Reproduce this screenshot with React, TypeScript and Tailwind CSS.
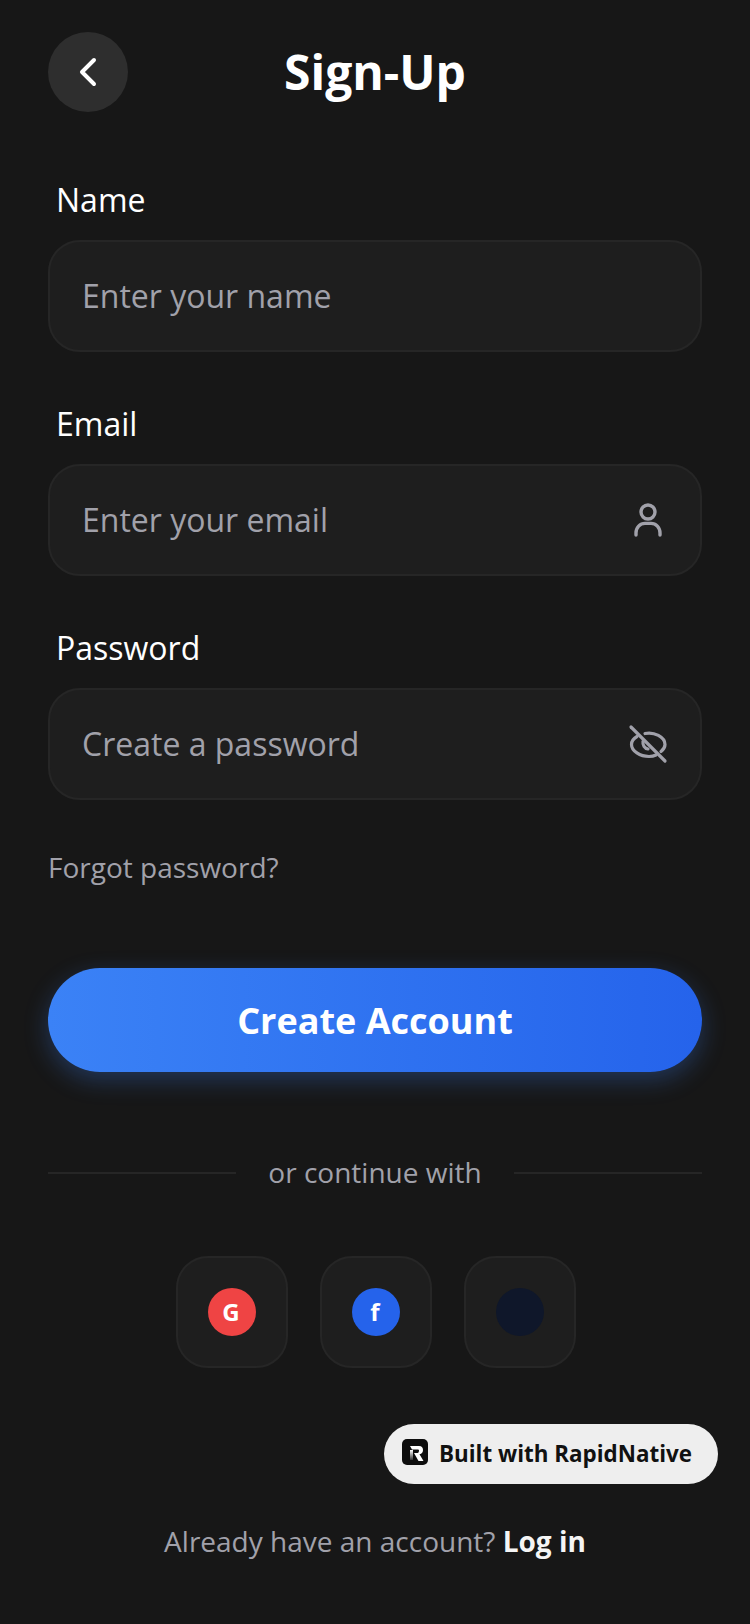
import type { ReactNode } from "react";
import { ChevronLeft } from "lucide-react";

const font = "font-['Open_Sans',sans-serif]";

function PersonIcon() {
  return (
    <svg width="40" height="40" viewBox="0 0 40 40" fill="none" stroke="#a1a1aa" strokeWidth="3.4" strokeLinecap="round">
      <circle cx="20" cy="12" r="7" />
      <path d="M8 35 V33 C8 27.500 12 23.400 17 23.400 H23 C28 23.400 32 27.500 32 33 V35" />
    </svg>
  );
}

function EyeOffIcon() {
  return (
    <svg width="40" height="40" viewBox="0 0 40 40" fill="none" stroke="#a1a1aa" strokeWidth="3.2" strokeLinecap="round" strokeLinejoin="round">
      <path d="M3 3 L37 37" />
      <path d="M17 9.500 C26 7.500 37 13 37 20.500 C37 23 35.500 25.500 33 27.500" />
      <path d="M9 12.500 C5.500 14.500 3.500 17.500 3.500 20.500 C3.500 27 12 32.500 21 32.500 C23.500 32.500 26 32 28 31" />
      <path d="M15 17.500 C14.500 21 16.500 24.500 20 25" />
    </svg>
  );
}

function BrandMark() {
  return (
    <svg width="26" height="26" viewBox="0 0 26 26" className="mb-1 shrink-0">
      <defs>
        <linearGradient id="stem" x1="0" y1="0" x2="0" y2="1">
          <stop offset="0" stopColor="#ffffff" />
          <stop offset="1" stopColor="#ffffff" stopOpacity="0.15" />
        </linearGradient>
      </defs>
      <rect width="26" height="26" rx="5" fill="#0d0d0d" />
      <path d="M8 7 H17 C20 7 21 9 21 11 C21 13 20 14.800 17.500 15.300 L21.500 22 H16.500 L12 14 H15.500 C16.500 14 17 12.500 17 11.500 C17 10.500 16.500 10.500 15.500 10.500 H10 Z" fill="#ffffff" />
      <path d="M8 11 H11 V21 H8 Z" fill="url(#stem)" />
    </svg>
  );
}

function Field({ label, placeholder, icon }: { label: string; placeholder: string; icon?: ReactNode }) {
  return (
    <div className="flex flex-col">
      <label className="pl-2 text-[32px] leading-[48px] text-white mb-4">{label}</label>
      <div className="h-[112px] rounded-[32px] border-2 border-[#262626] bg-[#1e1e1e] px-8 flex items-center justify-between">
        <span className="text-[32px] leading-[48px] text-[#a1a1aa]">{placeholder}</span>
        {icon}
      </div>
    </div>
  );
}

function SocialTile({ bg, letter }: { bg: string; letter?: string }) {
  return (
    <div className="w-[112px] h-[112px] rounded-[32px] border-2 border-[#262626] bg-[#1e1e1e] flex items-center justify-center">
      <div className={`w-12 h-12 pr-0.5 rounded-full flex items-center justify-center text-white font-bold text-2xl ${bg}`}>{letter}</div>
    </div>
  );
}

export default function App() {
  return (
    <div className={`${font} relative w-[750px] h-[1624px] bg-[#171717] px-12 pt-8 overflow-hidden`}>
      <header className="relative flex items-center justify-center h-20">
        <div className="absolute left-0 top-0 w-20 h-20 rounded-full bg-[#2e2e2e] flex items-center justify-center">
          <ChevronLeft size={48} color="#ffffff" strokeWidth={2} />
        </div>
        <h1 className="text-[48px] leading-[72px] font-bold text-white">Sign-Up</h1>
      </header>

      <div className="mt-16 flex flex-col gap-12">
        <Field label="Name" placeholder="Enter your name" />
        <Field label="Email" placeholder="Enter your email" icon={<PersonIcon />} />
        <Field label="Password" placeholder="Create a password" icon={<EyeOffIcon />} />
      </div>

      <p className="mt-[47px] text-[28px] leading-[40px] text-[#a1a1aa]">Forgot password?</p>

      <button className="mt-[81px] w-full h-[104px] pt-0.5 rounded-full bg-gradient-to-r from-[#3b82f6] to-[#2563eb] shadow-[0_8px_24px_rgba(59,130,246,0.3)] text-white text-[36px] font-bold">
        Create Account
      </button>

      <div className="mt-20 flex items-center gap-8">
        <div className="flex-1 h-0.5 mt-0.5 bg-[#262626]" />
        <span className="text-[28px] leading-[40px] text-[#a1a1aa]">or continue with</span>
        <div className="flex-1 h-0.5 mt-0.5 bg-[#262626]" />
      </div>

      <div className="mt-16 pl-0.5 flex justify-center gap-8">
        <SocialTile bg="bg-[#ef4444]" letter="G" />
        <SocialTile bg="bg-[#2563eb]" letter="f" />
        <SocialTile bg="bg-[#0f172a]" />
      </div>

      <p className="mt-[153px] text-center text-[28px] leading-[40px] text-[#a1a1aa]">
        Already have an account? <span className="font-bold text-[#f5f5f5]">Log in</span>
      </p>

      <div className="absolute left-[384px] top-[1424px] w-[334px] h-[60px] rounded-full bg-[#eeeeee] flex items-center pl-[18px] gap-[11px]">
        <BrandMark />
        <span className="text-[22.4px] font-bold text-[#111111] whitespace-nowrap">Built with RapidNative</span>
      </div>
    </div>
  );
}
